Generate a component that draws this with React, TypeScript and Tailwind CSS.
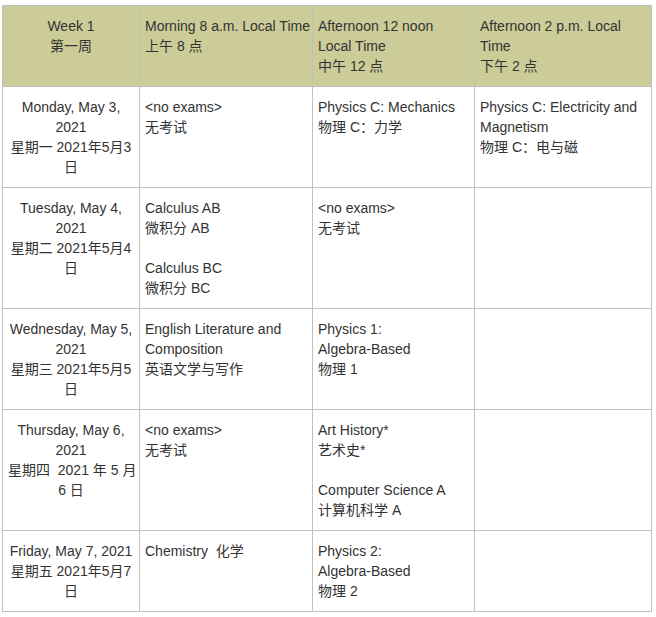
const rows: { day: string[]; morning: string[]; noon: string[]; late: string[] }[] = [
  {
    day: ["Monday, May 3,", "2021", "星期一 2021年5月3", "日"],
    morning: ["<no exams>", "无考试"],
    noon: ["Physics C: Mechanics", "物理 C：力学"],
    late: ["Physics C: Electricity and", "Magnetism", "物理 C：电与磁"],
  },
  {
    day: ["Tuesday, May 4,", "2021", "星期二 2021年5月4", "日"],
    morning: ["Calculus AB", "微积分 AB", "", "Calculus BC", "微积分 BC"],
    noon: ["<no exams>", "无考试"],
    late: [],
  },
  {
    day: ["Wednesday, May 5,", "2021", "星期三 2021年5月5", "日"],
    morning: ["English Literature and", "Composition", "英语文学与写作"],
    noon: ["Physics 1:", "Algebra-Based", "物理 1"],
    late: [],
  },
  {
    day: ["Thursday, May 6,", "2021", "星期四  2021 年 5 月", "6 日"],
    morning: ["<no exams>", "无考试"],
    noon: ["Art History*", "艺术史*", "", "Computer Science A", "计算机科学 A"],
    late: [],
  },
  {
    day: ["Friday, May 7, 2021", "星期五 2021年5月7", "日"],
    morning: ["Chemistry  化学"],
    noon: ["Physics 2:", "Algebra-Based", "物理 2"],
    late: [],
  },
];

const Lines = ({ lines }: { lines: string[] }) => (
  <>
    {lines.map((l, i) => (
      <div key={i} className="h-5 whitespace-pre">
        {l}
      </div>
    ))}
  </>
);

const cell = "border border-[#c0c0c0] px-[5px] py-[10px] align-top";

export default function App() {
  return (
    <div
      className="pl-[2px] pt-[5px] bg-white text-[14px] leading-5 text-[#333333]"
      style={{ fontFamily: '"Liberation Sans", "Noto Sans CJK SC", sans-serif' }}
    >
      <table className="table-fixed border-collapse w-[649px]">
        <colgroup>
          <col className="w-[137px]" />
          <col className="w-[173px]" />
          <col className="w-[162px]" />
          <col className="w-[177px]" />
        </colgroup>
        <thead>
          <tr className="bg-[#cccc99] h-[81px]">
            <th className={`${cell} font-normal text-center`}>
              <Lines lines={["Week 1", "第一周"]} />
            </th>
            <th className={`${cell} font-normal text-left`}>
              <Lines lines={["Morning 8 a.m. Local Time", "上午 8 点"]} />
            </th>
            <th className={`${cell} font-normal text-left`}>
              <Lines lines={["Afternoon 12 noon", "Local Time", "中午 12 点"]} />
            </th>
            <th className={`${cell} font-normal text-left`}>
              <Lines lines={["Afternoon 2 p.m. Local", "Time", "下午 2 点"]} />
            </th>
          </tr>
        </thead>
        <tbody>
          {rows.map((r, i) => (
            <tr key={i}>
              <td className={`${cell} text-center`}>
                <Lines lines={r.day} />
              </td>
              <td className={cell}>
                <Lines lines={r.morning} />
              </td>
              <td className={cell}>
                <Lines lines={r.noon} />
              </td>
              <td className={cell}>
                <Lines lines={r.late} />
              </td>
            </tr>
          ))}
        </tbody>
      </table>
    </div>
  );
}
